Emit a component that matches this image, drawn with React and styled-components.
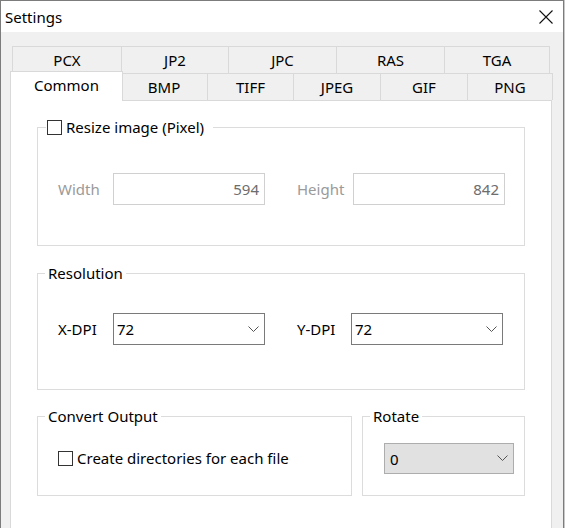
import React from "react";
import styled, { createGlobalStyle } from "styled-components";

const Global = createGlobalStyle`
  html, body { margin: 0; padding: 0; }
  body {
    width: 565px; height: 528px; overflow: hidden;
    background: #c8c8c8;
    font-family: "Noto Sans", "Open Sans", sans-serif;
    font-size: 15px; color: #000;
  }
  * { box-sizing: border-box; }
`;

const Window = styled.div`
  width: 564px;
  height: 528px;
  overflow: hidden;
  border: 1px solid #7c7c7c;
  border-bottom: none;
  background: #f0f0f0;
  display: flex;
  flex-direction: column;
`;

const TitleBar = styled.div`
  height: 31px;
  flex: none;
  background: #fff;
  display: flex;
  align-items: center;
  justify-content: space-between;
  padding: 0 10px 0 4px;
  line-height: 20px;
`;

const Body = styled.div`
  padding: 14px 0 0 9px;
  display: flex;
  flex-direction: column;
`;

const TabRow = styled.div`
  display: flex;
  margin-left: 2px;
  height: 27px;
`;

const Tab = styled.div`
  width: ${(p) => p.$w + 1}px;
  margin-right: -1px;
  flex: none;
  border: 1px solid #d9d9d9;
  border-bottom: none;
  background: #f0f0f0;
  display: flex;
  align-items: center;
  justify-content: center;
  line-height: 20px;
`;

const ActiveTab = styled(Tab)`
  width: ${(p) => p.$w + 5}px;
  margin: -2px -3px -1px -2px;
  height: 30px;
  background: #fff;
  position: relative;
  z-index: 1;
  padding-bottom: 3px;
`;

const Panel = styled.div`
  width: 542px;
  height: 460px;
  flex: none;
  background: #fff;
  border: 1px solid #d9d9d9;
  padding: 16px 26px 0 26px;
  display: flex;
  flex-direction: column;
`;

const Group = styled.fieldset`
  margin: ${(p) => p.$mt || 0}px 0 0 0;
  padding: 0;
  border: 1px solid #dcdcdc;
  min-width: 0;
  flex: ${(p) => (p.$grow ? "1 1 0" : "none")};
  width: ${(p) => (p.$w ? p.$w + "px" : "auto")};
`;

const Legend = styled.legend`
  margin-left: ${(p) => p.$ml ?? 7}px;
  padding: 0 ${(p) => p.$pr ?? 3}px 0 ${(p) => p.$pl ?? 3}px;
  line-height: 20px;
  height: 20px;
  display: flex;
  align-items: center;
  gap: 4px;
`;

const GroupBody = styled.div`
  padding: ${(p) => p.$pt}px ${(p) => p.$pr || 0}px ${(p) => p.$pb}px
    ${(p) => p.$pl}px;
  display: flex;
  align-items: center;
`;

const Check = styled.span`
  width: 15px;
  height: 15px;
  flex: none;
  border: 1px solid #333;
  background: #fff;
`;

const CheckLabel = styled.label`
  display: flex;
  align-items: center;
  gap: 4px;
  line-height: 20px;
`;

const FieldLabel = styled.span`
  width: ${(p) => p.$w}px;
  flex: none;
  color: ${(p) => (p.$disabled ? "#9a9a9a" : "#000")};
  line-height: 20px;
`;

const Input = styled.div`
  width: 152px;
  height: 32px;
  flex: none;
  border: 1px solid #d0d0d0;
  background: #fff;
  color: #6d6d6d;
  padding-right: 5px;
  display: flex;
  align-items: center;
  justify-content: flex-end;
`;

const Select = styled.div`
  width: ${(p) => p.$w}px;
  height: ${(p) => p.$h || 32}px;
  flex: none;
  border: 1px solid ${(p) => (p.$gray ? "#adadad" : "#7a7a7a")};
  background: ${(p) => (p.$gray ? "#e1e1e1" : "#fff")};
  display: flex;
  align-items: center;
  justify-content: space-between;
  padding: 0 5px 0 ${(p) => p.$pl || 3}px;
  line-height: 20px;
`;

const Spacer = styled.span`
  width: ${(p) => p.$w}px;
  flex: none;
`;

const BottomRow = styled.div`
  display: flex;
  gap: 10px;
  margin-top: 16px;
  align-items: stretch;
`;

const Chevron = () => (
  <svg width="11" height="7" viewBox="0 0 11 7">
    <polyline points="0.5,0.5 5.5,5.5 10.5,0.5" fill="none" stroke="#555" strokeWidth="1" />
  </svg>
);

const CloseIcon = () => (
  <svg width="14" height="14" viewBox="0 0 14 14">
    <path d="M0.5 0.5 L13.5 13.5 M13.5 0.5 L0.5 13.5" stroke="#111" strokeWidth="1.1" fill="none" />
  </svg>
);

const row1 = [
  ["PCX", 109],
  ["JP2", 107],
  ["JPC", 108],
  ["RAS", 108],
  ["TGA", 105],
];
const row2 = [
  ["Common", 108, true],
  ["BMP", 87],
  ["TIFF", 86],
  ["JPEG", 87],
  ["GIF", 87],
  ["PNG", 85],
];

export default function App() {
  return (
    <>
      <Global />
      <Window>
        <TitleBar>
          <span>Settings</span>
          <CloseIcon />
        </TitleBar>
        <Body>
          <TabRow>
            {row1.map(([t, w]) => (
              <Tab key={t} $w={w}>{t}</Tab>
            ))}
          </TabRow>
          <TabRow>
            {row2.map(([t, w, a]) =>
              a ? (
                <ActiveTab key={t} $w={w}>{t}</ActiveTab>
              ) : (
                <Tab key={t} $w={w}>{t}</Tab>
              )
            )}
          </TabRow>
          <Panel>
            <Group>
              <Legend $ml={8} $pl={1} $pr={9}>
                <Check />
                <span>Resize image (Pixel)</span>
              </Legend>
              <GroupBody $pt={36} $pb={40} $pl={20}>
                <FieldLabel $w={55} $disabled>Width</FieldLabel>
                <Input>594</Input>
                <Spacer $w={32} />
                <FieldLabel $w={56} $disabled>Height</FieldLabel>
                <Input>842</Input>
              </GroupBody>
            </Group>
            <Group $mt={17}>
              <Legend>Resolution</Legend>
              <GroupBody $pt={30} $pb={44} $pl={20}>
                <FieldLabel $w={55}>X-DPI</FieldLabel>
                <Select $w={152}>
                  <span>72</span>
                  <Chevron />
                </Select>
                <Spacer $w={32} />
                <FieldLabel $w={54}>Y-DPI</FieldLabel>
                <Select $w={152}>
                  <span>72</span>
                  <Chevron />
                </Select>
              </GroupBody>
            </Group>
            <BottomRow>
              <Group $grow>
                <Legend>Convert Output</Legend>
                <GroupBody $pt={22} $pb={27} $pl={20}>
                  <CheckLabel>
                    <Check />
                    <span>Create directories for each file</span>
                  </CheckLabel>
                </GroupBody>
              </Group>
              <Group $w={163}>
                <Legend>Rotate</Legend>
                <GroupBody $pt={17} $pb={21} $pl={21}>
                  <Select $w={130} $h={31} $gray $pl={5}>
                    <span>0</span>
                    <Chevron />
                  </Select>
                </GroupBody>
              </Group>
            </BottomRow>
          </Panel>
        </Body>
      </Window>
    </>
  );
}
